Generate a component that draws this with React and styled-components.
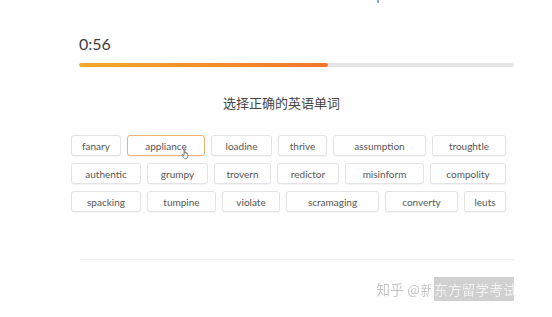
import React from "react";
import styled, { createGlobalStyle } from "styled-components";

const GlobalStyle = createGlobalStyle`
  html, body {
    margin: 0;
    padding: 0;
    background: #fff;
  }
  body {
    font-family: Lato, "Noto Sans", "Noto Sans CJK SC", sans-serif;
  }
`;

const Page = styled.div`
  position: relative;
  width: 552px;
  height: 317px;
  overflow: hidden;
  box-sizing: border-box;
  padding: 34px 38px 0 79px;
  background: #fff;
`;

const TopMark = styled.div`
  position: absolute;
  top: 0;
  left: 377px;
  width: 2px;
  height: 3px;
  background: linear-gradient(90deg, #f29b38 50%, #7aa7d8 50%);
`;

const Timer = styled.div`
  font-size: 16px;
  line-height: 20px;
  color: #3d3d3d;
`;

const Track = styled.div`
  margin-top: 9px;
  height: 4px;
  border-radius: 2px;
  background: #e4e4e4;
  overflow: hidden;
`;

const Fill = styled.div`
  height: 100%;
  border-radius: 2px;
  background: linear-gradient(90deg, #f4a82a, #f3762a);
`;

const Heading = styled.div`
  margin-top: 27px;
  padding-right: 30px;
  text-align: center;
  font-family: "Noto Sans CJK SC", sans-serif;
  font-size: 13px;
  line-height: 18px;
  color: #444;
`;

const Options = styled.div`
  margin: 23px 0 0 -8px;
  width: 435px;
  display: flex;
  flex-direction: column;
  gap: 7px;
`;

const OptionRow = styled.div`
  display: flex;
  gap: 6px;
`;

const Chip = styled.div`
  position: relative;
  box-sizing: border-box;
  width: ${(p) => p.$w}px;
  height: 21px;
  display: flex;
  align-items: center;
  justify-content: center;
  font-size: 10px;
  color: #555;
  background: #fff;
  border: ${(p) => (p.$active ? "1.5px solid #f0b078" : "1px solid #e3e3e3")};
  border-radius: 3px;
  box-shadow: 0 1px 1px rgba(0, 0, 0, 0.05);
`;

const Pointer = styled.svg`
  position: absolute;
  left: 53px;
  top: 12px;
`;

const Divider = styled.div`
  margin-top: 47px;
  margin-left: 1px;
  height: 1px;
  background: #efefef;
`;

const Footer = styled.div`
  margin-top: 19px;
  margin-right: -3px;
  display: flex;
  justify-content: flex-end;
`;

const Watermark = styled.div`
  position: relative;
  font-family: "Noto Sans CJK SC", sans-serif;
  font-size: 13.5px;
  line-height: 20px;
  letter-spacing: 0.3px;
  white-space: nowrap;
  span {
    position: relative;
    color: transparent;
    background: linear-gradient(90deg, #c2c2c2 55px, #f3f3f3 55px);
    -webkit-background-clip: text;
    background-clip: text;
  }
`;

const Shade = styled.div`
  position: absolute;
  right: 3px;
  top: -2px;
  width: 80px;
  height: 24px;
  background: #d0d0d0;
`;

const rows = [
  [
    ["fanary", 50],
    ["appliance", 78, true],
    ["loadine", 61],
    ["thrive", 49],
    ["assumption", 93],
    ["troughtle", 74],
  ],
  [
    ["authentic", 70],
    ["grumpy", 61],
    ["trovern", 57],
    ["redictor", 62],
    ["misinform", 79],
    ["compolity", 76],
  ],
  [
    ["spacking", 70],
    ["tumpine", 69],
    ["violate", 58],
    ["scramaging", 93],
    ["converty", 73],
    ["leuts", 42],
  ],
];

const HandCursor = () => (
  <Pointer width="10" height="12" viewBox="0 0 10 12">
    <path
      d="M3 1.2c0-.6.9-.6.9 0v4l.1-.6c0-.6.9-.6.9 0v.6c0-.6.9-.6.9 0v.5c0-.6.9-.6.9 0v2.6c0 1.4-.9 2.4-2.2 2.4H4.4c-.8 0-1.3-.4-1.7-1L1 7.2c-.3-.5.3-1 .7-.6l1.3 1.2z"
      fill="#fff"
      stroke="#555"
      strokeWidth="0.7"
    />
  </Pointer>
);

export default function App() {
  return (
    <>
      <GlobalStyle />
      <Page>
        <TopMark />
        <Timer>0:56</Timer>
        <Track>
          <Fill style={{ width: `${(249 / 435) * 100}%` }} />
        </Track>
        <Heading>选择正确的英语单词</Heading>
        <Options>
          {rows.map((row, i) => (
            <OptionRow key={i}>
              {row.map(([word, w, active]) => (
                <Chip key={word} $w={w} $active={active}>
                  {word}
                  {active && <HandCursor />}
                </Chip>
              ))}
            </OptionRow>
          ))}
        </Options>
        <Divider />
        <Footer>
          <Watermark>
            <Shade />
            <span>知乎 @新东方留学考试</span>
          </Watermark>
        </Footer>
      </Page>
    </>
  );
}
